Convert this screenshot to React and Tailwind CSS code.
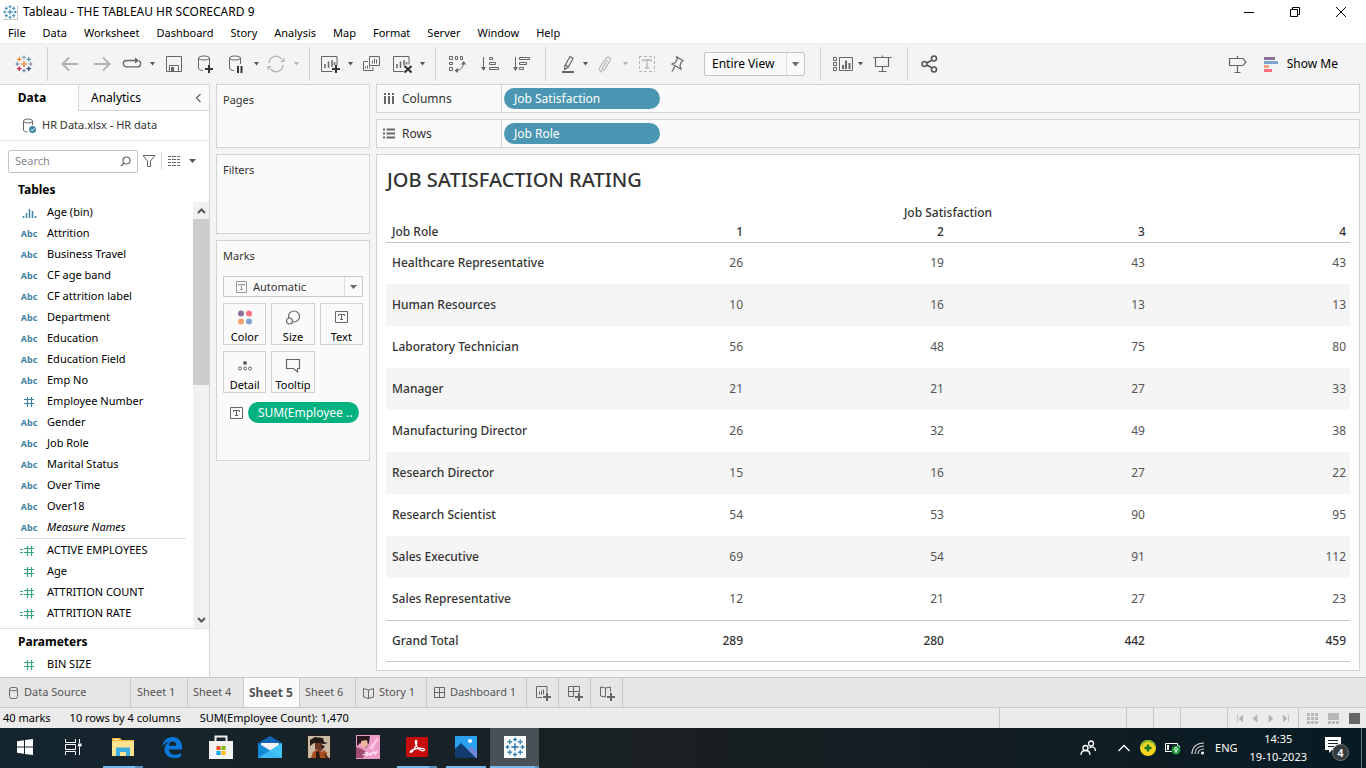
import React from "react";

const G = "#666";

function Svg({ w = 20, h = 20, children, ...rest }) {
  return (
    <svg width={w} height={h} viewBox={`0 0 ${w} ${h}`} fill="none" stroke={G} aria-hidden="true" className="shrink-0" {...rest}>
      {children}
    </svg>
  );
}

const CROSSES = [
  [8, 8, 3],
  [8, 2, 1.6],
  [8, 14, 1.6],
  [2, 8, 1.6],
  [14, 8, 1.6],
  [3.8, 3.8, 2],
  [12.2, 3.8, 2],
  [3.8, 12.2, 2],
  [12.2, 12.2, 2],
];

function TableauMark({ size = 16, colors }) {
  return (
    <svg width={size} height={size} viewBox="0 0 16 16" fill="none" aria-hidden="true" className="shrink-0">
      {CROSSES.map(([x, y, r], i) => (
        <path key={i} d={`M${x - r} ${y}H${x + r}M${x} ${y - r}V${y + r}`} stroke={colors[i % colors.length]} strokeWidth={1.1} />
      ))}
    </svg>
  );
}

const BLUE_MARK = ["#1f6f9f", "#2f7fae", "#2f7fae", "#2f7fae", "#2f7fae", "#3f8ab5", "#3f8ab5", "#3f8ab5", "#3f8ab5"];
const COLOR_MARK = ["#e8762d", "#7b9bb5", "#7082a8", "#5f83ab", "#7b86a8", "#eb912c", "#5b9aa5", "#c5203e", "#1f447e"];

function Caret({ className = "", light = false, label = "More options" }) {
  return (
    <button type="button" aria-label={label} className={`flex w-2 shrink-0 items-center justify-center ${className}`}>
      <svg width="5" height="4" viewBox="0 0 5 4" aria-hidden="true">
        <path d="M0 0h5L2.5 3.5z" fill={light ? "#b4b4b4" : "#555"} />
      </svg>
    </button>
  );
}

function Tool({ label, className = "", children }) {
  return (
    <button type="button" aria-label={label} className={`flex w-5 shrink-0 items-center justify-center ${className}`}>
      {children}
    </button>
  );
}

function Sep({ className = "" }) {
  return <div className={`h-[34px] w-px shrink-0 bg-[#d0d0d0] ${className}`} />;
}

function Plus({ x, y, color = "#333" }) {
  return <path d={`M${x - 4} ${y}h8M${x} ${y - 4}v8`} stroke={color} strokeWidth="2" />;
}

function TitleBar() {
  return (
    <header className="flex h-6 items-center bg-white pr-0.5 pl-[3px]">
      <span className="border-r border-b border-[#c8c8c8]"><TableauMark size={14} colors={BLUE_MARK} /></span>
      <h1 className="ml-[5px] text-xs">Tableau - THE TABLEAU HR SCORECARD 9</h1>
      <div className="ml-auto flex h-5 items-center">
        <button type="button" aria-label="Minimize" className="flex w-[46px] justify-center">
          <Svg w={10} h={10} stroke="#000"><path d="M0 5.5h10" /></Svg>
        </button>
        <button type="button" aria-label="Restore" className="flex w-[46px] justify-center">
          <Svg w={10} h={10} stroke="#000"><path d="M.5 2.5h7v7h-7zM2.5 2.5v-2h7v7h-2" /></Svg>
        </button>
        <button type="button" aria-label="Close" className="flex w-[46px] justify-center">
          <Svg w={10} h={10} stroke="#000"><path d="M0 0l10 10M10 0L0 10" /></Svg>
        </button>
      </div>
    </header>
  );
}

const MENUS = ["File", "Data", "Worksheet", "Dashboard", "Story", "Analysis", "Map", "Format", "Server", "Window", "Help"];

function MenuBar() {
  return (
    <nav aria-label="Main menu" className="flex h-[19px] items-center gap-[17px] bg-white pl-2 text-[11px]">
      {MENUS.map((m) => (
        <button type="button" key={m}>{m}</button>
      ))}
    </nav>
  );
}

function Toolbar() {
  return (
    <div role="toolbar" aria-label="Toolbar" className="flex h-[41px] shrink-0 items-center border-t border-[#ececec] bg-[#f4f4f4] text-xs">
      <button type="button" aria-label="Start page" className="flex w-[47px] justify-center">
        <TableauMark size={18} colors={COLOR_MARK} />
      </button>
      <Sep />
      <Tool label="Undo" className="ml-3">
        <Svg stroke="#b0b0b0" strokeWidth="1.8"><path d="M18 10H3M9 3.5L2.5 10 9 16.500" /></Svg>
      </Tool>
      <Tool label="Redo" className="ml-3">
        <Svg stroke="#b0b0b0" strokeWidth="1.8"><path d="M2 10h15M11 3.500L17.500 10 11 16.500" /></Svg>
      </Tool>
      <Tool label="Replay" className="ml-[10px]">
        <Svg strokeWidth="1.300"><path d="M6 6.500H4.500a3.200 3.200 0 000 6.400h11a3.200 3.200 0 001.500-6M6 6.500h8" /><path d="M13 3.500l4 3-4 3z" fill={G} stroke="none" /></Svg>
      </Tool>
      <Caret className="ml-1.5" />
      <Tool label="Save" className="ml-2">
        <Svg><path d="M2.500 2.500h15v15h-15zM5.500 17.500v-6h9v6" /><path d="M7 13h3v4H7z" fill={G} stroke="none" /></Svg>
      </Tool>
      <Tool label="New data source" className="ml-[11px]">
        <Svg><ellipse cx="9" cy="4" rx="5.500" ry="2" /><path d="M3.500 4v10c0 1.600 2 2.400 4.500 2.500M14.500 4v7" /><Plus x={14} y={15} /></Svg>
      </Tool>
      <Tool label="Pause auto updates" className="ml-[11px]">
        <Svg><ellipse cx="9" cy="4" rx="5.500" ry="2" /><path d="M3.500 4v10c0 1.600 2 2.400 4.500 2.500M14.500 4v6" /><path d="M12 12v7M15.500 12v7" stroke="#333" strokeWidth="2" /></Svg>
      </Tool>
      <Caret className="ml-1.5" />
      <Tool label="Run update" className="ml-1.5">
        <Svg stroke="#b8b8b8" strokeWidth="1.400"><path d="M3 9a7 7 0 0112.500-4M17 11a7 7 0 01-12.500 4" /><path d="M18.500 3.500v4.500h-4.500zM1.500 16.500V12H6z" fill="#b8b8b8" stroke="none" /></Svg>
      </Tool>
      <Caret className="ml-1.5" light />
      <Sep className="ml-[9px]" />
      <Tool label="New worksheet" className="ml-[10px]">
        <Svg><path d="M12.500 17.500h-11v-15h15.500v9" /><path d="M5 14v-4M8.500 14V7.500M12 13V6M14.500 11V8" strokeWidth="1.500" /><Plus x={16} y={15} /></Svg>
      </Tool>
      <Caret className="ml-1.5" />
      <Tool label="Duplicate" className="ml-[7px]">
        <Svg><path d="M8.500 2.500h10v9h-10zM7 7.500H2.500v9h9.500v-3.500M11.500 9.500v-3M13.500 9.500v-5M15.500 9.500v-4M4.500 14.500v-2M6.500 14.500v-3M8.500 14.500v-2" /></Svg>
      </Tool>
      <Tool label="Clear sheet" className="ml-[11px]">
        <Svg><path d="M11.500 17.500h-10v-15h15.500v8" /><path d="M5 14v-4M8.500 14V7.500M12 11.500V6M14.500 10.500V8" strokeWidth="1.500" /><path d="M12.500 12l7 6.500M19.500 12l-7 6.500" stroke="#333" strokeWidth="2" /></Svg>
      </Tool>
      <Caret className="ml-1.5" />
      <Sep className="ml-[9px]" />
      <Tool label="Swap rows and columns" className="ml-[11px]">
        <Svg><path d="M2.500 2.500h3v3h-3zM8.500 2.500h2v3h-2zM13.500 2.500h2v3h-2zM2.500 8.500h3v2h-3zM2.500 13.500h3v3h-3zM16.500 9c0 4-2.500 7-7.500 7.500" /><path d="M14 10.500L16.700 7l2.500 3.500zM11 14l-3.500 2.500L11 19z" fill={G} stroke="none" /></Svg>
      </Tool>
      <Tool label="Sort ascending" className="ml-[13px]">
        <Svg><path d="M3.500 3v12M9.500 3.500h3v2h-3zM9.500 8.500h6v2h-6zM9.500 13.500h9v2h-9z" /><path d="M1 13h5l-2.500 4z" fill={G} stroke="none" /></Svg>
      </Tool>
      <Tool label="Sort descending" className="ml-[11px]">
        <Svg><path d="M4.500 3v12M8.500 3.500h10v2h-10zM8.500 8.500h7v2h-7zM8.500 13.500h4v2h-4z" /><path d="M2 13h5l-2.500 4z" fill={G} stroke="none" /></Svg>
      </Tool>
      <Sep className="ml-[14px]" />
      <Tool label="Highlight" className="ml-3">
        <Svg><path d="M12 2.500l3 2-5 9-3.500 2 .5-4zM7.500 11l3 2" strokeWidth="1.200" /><path d="M4 18h12" strokeWidth="2" /></Svg>
      </Tool>
      <Caret className="ml-[3px]" />
      <Tool label="Group members" className="ml-1.5">
        <Svg stroke="#b4b4b4" strokeWidth="1.200"><path d="M12.500 6l-5 8c-1 2 1.200 3 2.200 1.400l5-8.200c2-3.500-2-5.500-4-2.400L5 13c-1.500 3 .5 5 2.500 5" /></Svg>
      </Tool>
      <Caret className="ml-1.5" light />
      <Tool label="Show mark labels" className="ml-2">
        <Svg stroke="#b4b4b4"><path d="M2 2.500h16M2 17.500h16M2.500 2v16M17.500 2v16" strokeDasharray="3 2" /><path d="M6 7.500V6h8v1.500M10 6v8M8 14h4" strokeWidth="1.300" /></Svg>
      </Tool>
      <Tool label="Fix axes" className="ml-[10px]">
        <Svg strokeWidth="1.200"><path d="M9 2.500l7 4-1.500 1-1.500 4 1 3.500-9-5 3.500-1.500 2-4zM8 12.500l-3 5" /></Svg>
      </Tool>
      <div className="ml-[17px] flex h-6 w-[101px] items-center rounded-[2px] border border-[#c4c4c4] bg-[#fafafa]">
        <label htmlFor="fit" className="sr-only">Fit</label>
        <select id="fit" className="h-full min-w-0 flex-1 appearance-none border-r border-[#dcdcdc] pl-[7px] leading-4">
          <option>Entire View</option>
        </select>
        <svg width="17" height="5" viewBox="0 0 17 5" aria-hidden="true"><path d="M5 0h7L8.500 4.500z" fill={G} /></svg>
      </div>
      <Sep className="ml-[15px]" />
      <button type="button" aria-label="Show or hide cards" className="ml-3 flex w-5 shrink-0">
        <Svg><path d="M.5 3.500h3v3h-3zM.5 8.500h3v3h-3zM.5 13.500h3v3h-3zM6.500 3.500h13v13h-13z" /><path d="M10 15v-4M13 15V6.500M16.500 15V9" strokeWidth="2" /></Svg>
      </button>
      <Caret className="ml-[3px]" />
      <Tool label="Presentation mode" className="ml-2">
        <Svg strokeWidth="1.200"><path d="M1.500 3.500h18M3.500 3.500v9h13v-9M10.500 12.500v5M6.500 17.500h8M10.500 1.500v2" /></Svg>
      </Tool>
      <Sep className="ml-[15px]" />
      <Tool label="Share" className="ml-3">
        <Svg strokeWidth="1.500" stroke="#555"><circle cx="4.500" cy="10" r="2.500" /><circle cx="14" cy="4.500" r="2.500" /><circle cx="14" cy="15.500" r="2.500" /><path d="M7 9l5-3M7 11l5 3" /></Svg>
      </Tool>
      <button type="button" aria-label="Data guide" className="mr-[17px] ml-auto">
        <Svg strokeWidth="1.200"><path d="M2.500 4.500h13.500l3 3.500-3 3.500H2.500zM10.500 2v2.500M10.500 11.500v7M7.500 18.500h6" /></Svg>
      </button>
      <button type="button" className="mr-7 flex items-center gap-2">
        <Svg w={15} h={16} stroke="none"><path d="M0 1h11v3H0z" fill="#8c6f9d" /><path d="M0 5h14v3H0z" fill="#7fa3cf" /><path d="M0 9h5v3H0z" fill="#f4a581" /><path d="M0 13h8v3H0z" fill="#f96f82" /></Svg>
        <span>Show Me</span>
      </button>
    </div>
  );
}

const FIELDS = [
  ["bin", "Age (bin)"], ["abc", "Attrition"], ["abc", "Business Travel"], ["abc", "CF age band"], ["abc", "CF attrition label"],
  ["abc", "Department"], ["abc", "Education"], ["abc", "Education Field"], ["abc", "Emp No"], ["num", "Employee Number"],
  ["abc", "Gender"], ["abc", "Job Role"], ["abc", "Marital Status"], ["abc", "Over Time"], ["abc", "Over18"], ["abc", "Measure Names"],
];
const MEASURES = [["calc", "ACTIVE EMPLOYEES"], ["meas", "Age"], ["calc", "ATTRITION COUNT"], ["calc", "ATTRITION RATE"]];

function FieldIcon({ kind }) {
  if (kind === "abc") return <span className="text-[9px] font-bold text-[#3f84a3]">Abc</span>;
  if (kind === "bin")
    return <Svg w={16} h={12} stroke="#3f84a3" strokeWidth="1.500"><path d="M2.500 11V9M5.500 11V6M8.500 11V2M11.500 11V4M14.500 11V9" /></Svg>;
  const color = kind === "num" ? "#3f84a3" : "#3aa37c";
  return (
    <Svg w={20} h={12} stroke={color} strokeWidth="1.200">
      <path d="M5 3.500h10M5 7.500h10M8.500 1v10M12.500 1v10" />
      {kind === "calc" && <path d="M1 4.500h3M1 7.500h3" strokeWidth="1" />}
    </Svg>
  );
}

function Field({ kind, name }) {
  return (
    <li>
      <button type="button" className="flex h-[21px] w-full items-center">
        <span className="flex w-[47px] items-center justify-center pl-[11px]"><FieldIcon kind={kind} /></span>
        <span className={name === "Measure Names" ? "italic" : ""}>{name}</span>
      </button>
    </li>
  );
}

function DataPane() {
  return (
    <aside className="flex w-[210px] shrink-0 flex-col border-t border-r border-[#d4d4d4] bg-white text-[11px]">
      <div role="tablist" className="flex h-[26px] shrink-0 text-xs">
        <button type="button" role="tab" aria-selected="true" className="w-[78px] pr-3.5 font-bold">Data</button>
        <div className="flex flex-1 items-center justify-between border-b border-l border-[#d4d4d4] bg-[#fafafa] pr-[7px] pl-3">
          <button type="button" role="tab" aria-selected="false">Analytics</button>
          <button type="button" aria-label="Collapse pane"><Svg w={7} h={10} strokeWidth="1.300"><path d="M5.500 1L1.500 5l4 4" /></Svg></button>
        </div>
      </div>
      <button type="button" className="flex h-[30px] shrink-0 items-center gap-[5px] border-b border-[#e2e2e2] pl-[22px] text-[#333]">
        <Svg w={15} h={16}>
          <ellipse cx="6" cy="3" rx="4.500" ry="2" /><path d="M1.500 3v9c0 1 1.500 2 4 2M10.500 3v4" />
          <circle cx="10.500" cy="11.500" r="3.500" fill="#3f84a3" stroke="none" /><path d="M8.800 11.500l1.300 1.300 2.300-2.500" stroke="#fff" />
        </Svg>
        HR Data.xlsx - HR data
      </button>
      <div className="flex h-[41px] shrink-0 items-center pb-px pl-2">
        <div className="flex h-[23px] w-[130px] items-center rounded-[2px] border border-[#c4c4c4] pr-1.5 pl-1.5">
          <input type="text" aria-label="Search" placeholder="Search" className="w-full min-w-0 flex-1 placeholder:text-[#8a8a8a]" />
          <Svg w={11} h={11} strokeWidth="1.200"><circle cx="6.500" cy="4.500" r="3.500" /><path d="M4 7L1 10" /></Svg>
        </div>
        <button type="button" aria-label="Filter fields" className="ml-1"><Svg w={14} h={14}><path d="M1 1.500h12L8.500 7v5.500h-3V7z" /></Svg></button>
        <div className="ml-[5px] h-[18px] w-px bg-[#d4d4d4]" />
        <button type="button" aria-label="View options" className="ml-1.5 flex items-center gap-[9px]">
          <Svg w={12} h={10}><path d="M0 .5h12M0 3.500h12M0 6.500h12M0 9.500h12" strokeDasharray="3 1 4 1" /></Svg>
          <svg width="7" height="4" viewBox="0 0 7 4" aria-hidden="true"><path d="M0 0h7L3.500 4z" fill="#555" /></svg>
        </button>
      </div>
      <h2 className="h-5 shrink-0 pl-[18px] text-xs leading-4 font-bold">Tables</h2>
      <div className="flex h-[427px] shrink-0 border-b border-[#e0e0e0]">
        <div className="min-w-0 flex-1">
          <ul>{FIELDS.map(([k, n]) => <Field key={n} kind={k} name={n} />)}</ul>
          <hr className="mr-[7px] mb-px ml-[15px] border-[#dcdcdc]" />
          <ul>{MEASURES.map(([k, n]) => <Field key={n} kind={k} name={n} />)}</ul>
        </div>
        <div className="flex w-4 flex-col bg-[#f1f1f1]">
          <button type="button" aria-label="Scroll up" className="flex h-[17px] items-center justify-center"><Svg w={9} h={6} strokeWidth="2" stroke="#555"><path d="M1 5l3.500-3.500L8 5" /></Svg></button>
          <div className="h-[166px] bg-[#cdcdcd]" />
          <button type="button" aria-label="Scroll down" className="mt-auto flex h-[17px] items-center justify-center"><Svg w={9} h={6} strokeWidth="2" stroke="#555"><path d="M1 1l3.500 3.500L8 1" /></Svg></button>
        </div>
      </div>
      <h2 className="h-[25px] shrink-0 pl-[18px] text-xs leading-[26px] font-bold">Parameters</h2>
      <ul><Field kind="meas" name="BIN SIZE" /></ul>
    </aside>
  );
}

function TIcon({ light = false, w = 13 }) {
  const c = w / 2;
  return (
    <Svg w={w} h={12} stroke={light ? "#999" : G}>
      <path d={`M.5 .5h${w - 1}v11h-${w - 1}z`} />
      <path d={`M${c - 3} 5V3.500h6V5M${c} 3.500v5M${c - 1.5} 8.500h3`} />
    </Svg>
  );
}

const CARD = "border border-[#d4d4d4] bg-[#fafafa]";

function MarkButton({ label, children }) {
  return (
    <button type="button" className="flex h-[42px] flex-col items-center justify-between border border-[#d0d0d0] bg-[#fafafa] pt-1.5 leading-[15px] text-black">
      {children}
      {label}
    </button>
  );
}

function Cards() {
  return (
    <div className="flex w-[154px] shrink-0 flex-col gap-1.5 text-[11px] leading-4 text-[#333]">
      <section className={`h-16 pt-[7px] pl-1.5 ${CARD}`}><h2>Pages</h2></section>
      <section className={`h-20 pt-[7px] pl-1.5 ${CARD}`}><h2>Filters</h2></section>
      <section className={`h-[221px] px-1.5 pt-[7px] ${CARD}`}>
        <h2>Marks</h2>
        <div className="mt-3 flex h-[21px] items-center rounded-[1px] border border-[#c8c8c8] pl-3">
          <TIcon light w={11} />
          <label htmlFor="mark-type" className="sr-only">Mark type</label>
          <select id="mark-type" className="ml-1.5 h-full min-w-0 flex-1 appearance-none border-r border-[#dcdcdc] leading-4"><option>Automatic</option></select>
          <svg width="17" height="4" viewBox="0 0 17 4" aria-hidden="true"><path d="M5 0h7L8.500 4z" fill={G} /></svg>
        </div>
        <div className="mt-1.5 grid grid-cols-3 gap-x-[5px] gap-y-1.5">
          <MarkButton label="Color">
            <Svg w={16} h={16} stroke="none"><circle cx="4" cy="3.500" r="3" fill="#8c6f9d" /><circle cx="12" cy="3.500" r="3" fill="#f96f82" /><circle cx="4" cy="11.500" r="3" fill="#f4a070" /><circle cx="12" cy="11.500" r="3" fill="#7fa3cf" /></Svg>
          </MarkButton>
          <MarkButton label="Size">
            <Svg w={16} h={16} strokeWidth="1.200"><circle cx="9" cy="6.500" r="5.500" /><circle cx="4.500" cy="11" r="3" fill="#fafafa" /></Svg>
          </MarkButton>
          <MarkButton label="Text"><span className="pt-px"><TIcon /></span></MarkButton>
          <MarkButton label="Detail">
            <Svg w={16} h={16}><circle cx="8" cy="5" r="2" fill={G} stroke="none" /><circle cx="3" cy="10.500" r="1.500" /><circle cx="8" cy="10.500" r="1.500" /><circle cx="13" cy="10.500" r="1.500" /></Svg>
          </MarkButton>
          <MarkButton label="Tooltip">
            <Svg w={16} h={16} strokeWidth="1.200"><path d="M1.500 1.500h13v9h-2v3.500l-4-3.500h-7z" /></Svg>
          </MarkButton>
        </div>
        <div className="mt-[9px] flex items-center gap-[5px] pl-[7px]">
          <TIcon />
          <button type="button" className="h-[21px] w-[111px] rounded-full bg-[#00b180] pl-2.5 text-left text-xs text-white">SUM(Employee ..</button>
        </div>
      </section>
    </div>
  );
}

function Shelf({ label, pill, icon }) {
  return (
    <section className={`flex h-[29px] items-center ${CARD}`}>
      <h2 className="flex h-full w-[125px] items-center gap-[7px] border-r border-[#d4d4d4] pl-1.5 text-[#333]">{icon}{label}</h2>
      <button type="button" className="ml-0.5 h-[21px] w-[156px] rounded-full bg-[#4a96b3] pl-2.5 text-left text-white">{pill}</button>
    </section>
  );
}

const ROWS = [
  ["Healthcare Representative", 26, 19, 43, 43],
  ["Human Resources", 10, 16, 13, 13],
  ["Laboratory Technician", 56, 48, 75, 80],
  ["Manager", 21, 21, 27, 33],
  ["Manufacturing Director", 26, 32, 49, 38],
  ["Research Director", 15, 16, 27, 22],
  ["Research Scientist", 54, 53, 90, 95],
  ["Sales Executive", 69, 54, 91, 112],
  ["Sales Representative", 12, 21, 27, 23],
];

function View() {
  return (
    <main className="flex min-w-0 flex-1 flex-col gap-1.5 text-xs">
      <Shelf label="Columns" pill="Job Satisfaction" icon={<Svg w={12} h={13} strokeWidth="2"><path d="M2 4v8M6 4v8M10 4v8M2 1v2M6 1v2M10 1v2" /></Svg>} />
      <Shelf label="Rows" pill="Job Role" icon={<Svg w={12} h={11} strokeWidth="2"><path d="M0 1.500h2M3.500 1.500H12M0 5.500h2M3.500 5.500H12M0 9.500h2M3.500 9.500H12" /></Svg>} />
      <section className="flex-1 border border-[#d4d4d4] bg-white px-[9px] pb-[7px] text-[#333]">
        <h2 className="h-12 pt-[11px] pl-px text-xl leading-7 font-medium">JOB SATISFACTION RATING</h2>
        <table className="w-full table-fixed border-collapse text-left">
          <colgroup>
            <col className="w-[16.6%]" /><col /><col /><col /><col />
          </colgroup>
          <thead>
            <tr className="h-5">
              <td />
              <th colSpan={4} className="text-center font-medium">Job Satisfaction</th>
            </tr>
            <tr className="h-[19px] border-b border-[#c4c4c4]">
              <th className="pl-1.5 font-medium">Job Role</th>
              {[1, 2, 3, 4].map((n) => <th key={n} className="pr-1 text-right font-medium">{n}</th>)}
            </tr>
          </thead>
          <tbody>
            {ROWS.map(([role, ...vals]) => (
              <tr key={role} className="h-[42px] even:bg-[#f5f5f5]">
                <th scope="row" className="pl-1.5 font-medium">{role}</th>
                {vals.map((v, i) => <td key={i} className="pr-1 text-right text-[#555]">{v}</td>)}
              </tr>
            ))}
          </tbody>
          <tfoot>
            <tr className="h-[41px] border-y border-[#c8c8c8]">
              <th scope="row" className="pl-1.5 font-medium">Grand Total</th>
              {[289, 280, 442, 459].map((v) => <td key={v} className="pr-1 text-right font-medium">{v}</td>)}
            </tr>
          </tfoot>
        </table>
      </section>
    </main>
  );
}

const TAB = "flex h-full items-center border-r border-[#c8c8c8]";
const StoryPath = "M.5 1.500l5 1.500 5-1.500v8.500l-5 1.500-5-1.500zM5.500 3v8.500";

function SheetTabs() {
  return (
    <nav aria-label="Sheets" className="flex h-[31px] shrink-0 border-y border-[#c8c8c8] bg-[#e6e6e6] text-[11px] text-[#555]">
      <button type="button" className={`${TAB} w-[131px] gap-1.5 pl-[9px]`}>
        <Svg w={9} h={12}><rect x=".5" y=".5" width="8" height="11" rx="2" /><path d="M1 3c2 1 5 1 7 0" /></Svg>Data Source
      </button>
      <button type="button" className={`${TAB} w-[57px] pl-1.5`}>Sheet 1</button>
      <button type="button" className={`${TAB} w-14 pl-[5px]`}>Sheet 4</button>
      <button type="button" className={`${TAB} w-14 bg-[#fafafa] pl-[5px] text-xs font-bold`}>Sheet 5</button>
      <button type="button" className={`${TAB} w-14 pl-[5px]`}>Sheet 6</button>
      <button type="button" className={`${TAB} w-[71px] gap-[5px] pl-[7px]`}><Svg w={11} h={12}><path d={StoryPath} /></Svg>Story 1</button>
      <button type="button" className={`${TAB} w-[100px] gap-[5px] pl-[7px]`}><Svg w={11} h={11}><path d="M.5 .5h10v10H.5zM5.500 .5v10M.5 5.500h10" /></Svg>Dashboard 1</button>
      <button type="button" aria-label="New worksheet" className={`${TAB} w-8 justify-center`}>
        <Svg w={16} h={16}><path d="M7 12.500H1.500V1.500h10.500v6M4.500 9.500v-3M6.500 9.500v-4M8.500 9.500v-5" /><path d="M8 12h8M12 8v8" strokeWidth="2" /></Svg>
      </button>
      <button type="button" aria-label="New dashboard" className={`${TAB} w-8 justify-center`}>
        <Svg w={16} h={16}><path d="M7 11.500H1.500V1.500h11v6M6.500 1.500v10M1.500 6.500H12" /><path d="M8 12h8M12 8v8" strokeWidth="2" /></Svg>
      </button>
      <button type="button" aria-label="New story" className={`${TAB} w-8 justify-center`}>
        <Svg w={16} h={16}><path d="M6.500 12L1.500 11V2l5 1 5-1v5M6.500 3v9" /><path d="M8 12h8M12 8v8" strokeWidth="2" /></Svg>
      </button>
    </nav>
  );
}

function StatusBar() {
  const cell = "h-full border-l border-[#c8c8c8]";
  return (
    <footer className="flex h-5 shrink-0 items-center bg-[#ebebeb] pl-[3px] text-[11px]">
      <span>40 marks</span>
      <span className="ml-[19px]">10 rows by 4 columns</span>
      <span className="ml-[19px]">SUM(Employee Count): 1,470</span>
      <div className="ml-auto flex h-full">
        <div className={`${cell} w-[127px]`} /><div className={`${cell} w-[27px]`} /><div className={`${cell} w-[27px]`} /><div className={`${cell} w-[47px]`} />
        <div className={`${cell} flex w-[71px] items-center justify-around px-1`}>
          {[["First", "M.5 0v7M6 0v7L2 3.500z"], ["Previous", "M5 0v7L1 3.500z"], ["Next", "M1 0v7l4-3.500z"], ["Last", "M5.500 0v7M0 0v7l4-3.500z"]].map(([l, d]) => (
            <button type="button" key={l} aria-label={l}><Svg w={6} h={7} stroke="#b4b4b4" strokeWidth=".8"><path d={d} fill="#b4b4b4" /></Svg></button>
          ))}
        </div>
        <div className={`${cell} flex w-[68px] items-center gap-2.5 pl-2`}>
          <button type="button" aria-label="Sheet sorter"><Svg w={11} h={11} stroke="none"><path d="M0 0h3v3H0zM4 0h3v3H4zM8 0h3v3H8zM0 4h3v3H0zM4 4h3v3H4zM8 4h3v3H8zM0 8h3v3H0zM4 8h3v3H4zM8 8h3v3H8z" fill="#b8b8b8" /></Svg></button>
          <button type="button" aria-label="Filmstrip"><Svg w={11} h={11} stroke="none"><path d="M0 0h11v7H0zM0 8h3v3H0zM4 8h3v3H4zM8 8h3v3H8z" fill="#b8b8b8" /></Svg></button>
          <button type="button" aria-label="Tabs view"><Svg w={11} h={11} stroke="none"><path d="M0 0h11v11H0z" fill={G} /></Svg></button>
        </div>
      </div>
    </footer>
  );
}

function TaskIcon({ label, running = false, grouped = false, active = false, children }) {
  const line = active
    ? "w-full border-r-4 border-[#5690bb] bg-[#76b9ed]"
    : grouped
      ? "w-10 border-r-8 border-[#5690bb] bg-[#76b9ed]"
      : running
        ? "w-10 bg-[#76b9ed]"
        : "w-10";
  return (
    <button type="button" aria-label={label} className={`flex h-full w-[49px] flex-col items-center ${active ? "bg-[#485256]" : ""}`}>
      <span className="flex flex-1 items-center">{children}</span>
      <span className={`h-0.5 ${line}`} />
    </button>
  );
}

function Taskbar() {
  return (
    <footer className="flex h-10 shrink-0 items-center bg-linear-to-r from-[#14252f] via-[#191f22] to-[#071b24] text-[11px] text-white">
      <TaskIcon label="Start">
        <Svg w={16} h={16} stroke="none"><path d="M0 2.300l7-1v6.200H0zM8 1.100L16 0v7.500H8zM0 8.500h7v6.200l-7-1zM8 8.500h8V16l-8-1.100z" fill="#fff" /></Svg>
      </TaskIcon>
      <TaskIcon label="Task view">
        <Svg w={17} h={16} stroke="#fff"><path d="M.5 0v3.500h10V0M.5 16v-3.500h10V16M.5 5.500h10v5H.5zM14.500 0v4M14.500 8v8" /><path d="M13 4.500h3.500v3H13z" fill="#fff" stroke="none" /></Svg>
      </TaskIcon>
      <TaskIcon label="File Explorer" grouped>
        <Svg w={22} h={18} stroke="none"><path d="M0 0h8l2 2h12v15H0z" fill="#f2b632" /><path d="M0 3h22v15H0z" fill="#ffe390" /><path d="M2 1h5v1H2z" fill="#fff3c4" /><path d="M4 9.500h14V18h-4v-4H8v4H4z" fill="#3aaee2" /></Svg>
      </TaskIcon>
      <TaskIcon label="Edge">
        <Svg w={20} h={21} stroke="none"><path d="M.3 9.500C1.200 3.500 5 0 10.500 0 16.500 0 20 4.500 20 9.500v3H7c0 3.500 3 5.200 6.200 5.200 2.300 0 4.200-.7 5.800-1.700v3.500c-1.700 1-4 1.500-6.800 1.500C6 21 2.500 17 2.500 12.500c0-3.500 2-6.500 5-8C4 5 1.600 7 .3 9.500zM7 8.800h7.200C14.200 6 12.800 4.600 10.600 4.600 8.300 4.600 7.200 6.600 7 8.800z" fill="#0a78d7" /></Svg>
      </TaskIcon>
      <TaskIcon label="Microsoft Store">
        <Svg w={24} h={24} stroke="none"><path d="M6.500 7V1.500h11V7" stroke="#eee" strokeWidth="2" /><path d="M0 6h24v18H0z" fill="#f3f3f3" /><path d="M7.500 11h4v4h-4z" fill="#f05021" /><path d="M12.500 11h4v4h-4z" fill="#7fba00" /><path d="M7.500 16h4v4h-4z" fill="#00a3ee" /><path d="M12.500 16h4v4h-4z" fill="#ffb900" /></Svg>
      </TaskIcon>
      <TaskIcon label="Mail">
        <Svg w={24} h={22} stroke="none"><path d="M0 7L12 0l12 7v15H0z" fill="#1066b5" /><path d="M3 7h18v8H3z" fill="#f4f4f4" /><path d="M0 7l13 8L0 22z" fill="#1688d8" /><path d="M24 7v15H0z" fill="#3bb8ef" /><path d="M24 7L12 15l12 7z" fill="#42c3f5" /></Svg>
      </TaskIcon>
      <TaskIcon label="Vice City">
        <Svg w={24} h={24} stroke="none"><path d="M0 0h24v24H0z" fill="#2a1c18" /><path d="M1 1h22v22H1z" fill="#cbbba4" /><path d="M3 5l5-3 8 1 1 4 4 1-4 1-10-1-4 3z" fill="#241a18" /><path d="M8 8h7l1 6-3 3-5-3z" fill="#6d3824" /><path d="M4 23l2-6 5-3 3 3 3-2 3 3v5z" fill="#a84e1f" /><path d="M13 10l5 1-2 3zM9 17l3-1 1 7H9z" fill="#2b1b17" /><path d="M17 18l5 5h-3z" fill="#482317" /></Svg>
      </TaskIcon>
      <TaskIcon label="Vice City Stories">
        <Svg w={24} h={24} stroke="none"><path d="M0 0h24v24H0z" fill="#ee9cc7" /><path d="M1 1h13l-1 7-3 5-3-3-3-2-3 3z" fill="#2b1821" /><path d="M5 6l6-1 1 5-3 3-4-2z" fill="#edb6a1" /><path d="M0 12l6 2 4 3-3 6H0z" fill="#a04a70" /><path d="M13 13l8-10 2 1-7 11z" fill="#f8c8e1" /><path d="M8 18l4-1-2 4 5-3-1 3 4-5 1 4 3-5M6 20l15-3" stroke="#fff1fa" strokeWidth=".8" /></Svg>
      </TaskIcon>
      <TaskIcon label="Acrobat" grouped>
        <Svg w={22} h={20} stroke="none"><rect width="22" height="20" rx="1" fill="#c70c0c" /><path d="M4 15c1 1.500 4-2 6-6.500 1-3 1-5 0-5s-1 3 1 6 5 5 7 4-1-2.500-5-2.200S4 13.500 4 15z" stroke="#fff" strokeWidth="1.300" /></Svg>
      </TaskIcon>
      <TaskIcon label="Photos" running>
        <Svg w={22} h={22} stroke="none"><path d="M0 0h22v22H0z" fill="#2ba1ed" /><path d="M13 13l3-3 6 6v6h-9z" fill="#7086d8" /><path d="M0 13l6-6 15 15H0z" fill="#123b70" /><circle cx="15" cy="5" r="2" fill="#fff" /></Svg>
      </TaskIcon>
      <TaskIcon label="Tableau" active>
        <span className="flex size-[22px] items-center justify-center bg-white"><TableauMark size={20} colors={BLUE_MARK} /></span>
      </TaskIcon>
      <div className="ml-auto flex h-full items-center">
        <button type="button" aria-label="People"><Svg w={16} h={16} stroke="#fff" strokeWidth="1.300"><circle cx="5.500" cy="8" r="2.500" /><path d="M1 15c0-6 9-6 9 0" /><circle cx="11" cy="3.500" r="2.500" /><path d="M9.500 8c3-2.500 6-.5 6 3" /></Svg></button>
        <button type="button" aria-label="Show hidden icons" className="ml-[22px]"><Svg w={12} h={8} stroke="#fff" strokeWidth="1.300"><path d="M.5 7L6 1.500 11.500 7" /></Svg></button>
        <button type="button" aria-label="Antivirus" className="ml-2.5"><Svg w={16} h={16} stroke="none"><circle cx="8" cy="8" r="8" fill="#f6d21c" /><path d="M8 0a8 8 0 018 8L12 3 1 7a8 8 0 017-7z" fill="#84bd2c" /><circle cx="8" cy="8" r="6" fill="#f8d823" /><path d="M8 4.500v7M4.500 8h7" stroke="#137d22" strokeWidth="2.500" /></Svg></button>
        <button type="button" aria-label="Battery" className="ml-[9px]"><Svg w={16} h={14} stroke="#fff"><path d="M.5 2.500h12v8H.5zM13 5h1.500v3H13" /><path d="M2 4h2v5H2z" fill="#fff" stroke="none" /><circle cx="11" cy="9" r="4.500" fill="#169338" stroke="none" /><path d="M11 12V8M9 8.500L11 6l2 2.500-2 2z" /></Svg></button>
        <button type="button" aria-label="Wi-Fi" className="ml-2.5"><Svg w={14} h={14} stroke="#ddd" strokeWidth="1.200"><path d="M1 13C1 6 6 2 13 2M4 13c0-5 3.500-8 9-8M7 13c0-3 2.500-5 6-5" /><circle cx="11.500" cy="12" r="1.500" fill="#fff" stroke="none" /></Svg></button>
        <button type="button" className="ml-2.5">ENG</button>
        <button type="button" className="ml-3 text-center leading-[18px]"><time className="block">14:35</time><time className="block">19-10-2023</time></button>
        <button type="button" aria-label="4 notifications" className="mr-3 ml-[18px]">
          <svg width="24" height="26" viewBox="0 0 24 26" aria-hidden="true">
            <path d="M0 2h16v13H7l-3 3v-3H0z" fill="#fff" /><path d="M3 5.500h10M3 8.500h10M3 11.500h6" stroke="#17222a" />
            <circle cx="15.500" cy="17.500" r="8" fill="#343b3e" stroke="#777" />
            <text x="15.500" y="21.500" textAnchor="middle" fontSize="11" fontWeight="600" fill="#fff">4</text>
          </svg>
        </button>
        <div className="mr-1 h-full w-px bg-[#6a7479]" />
      </div>
    </footer>
  );
}

export default function App() {
  return (
    <div className="flex min-h-screen flex-col bg-[#f4f4f4] font-['Noto_Sans',sans-serif] whitespace-nowrap text-black">
      <TitleBar />
      <MenuBar />
      <Toolbar />
      <div className="flex flex-1 gap-1.5 pr-1.5">
        <DataPane />
        <div className="flex min-w-0 flex-1 gap-1.5 pb-1.5">
          <Cards />
          <View />
        </div>
      </div>
      <SheetTabs />
      <StatusBar />
      <Taskbar />
    </div>
  );
}
